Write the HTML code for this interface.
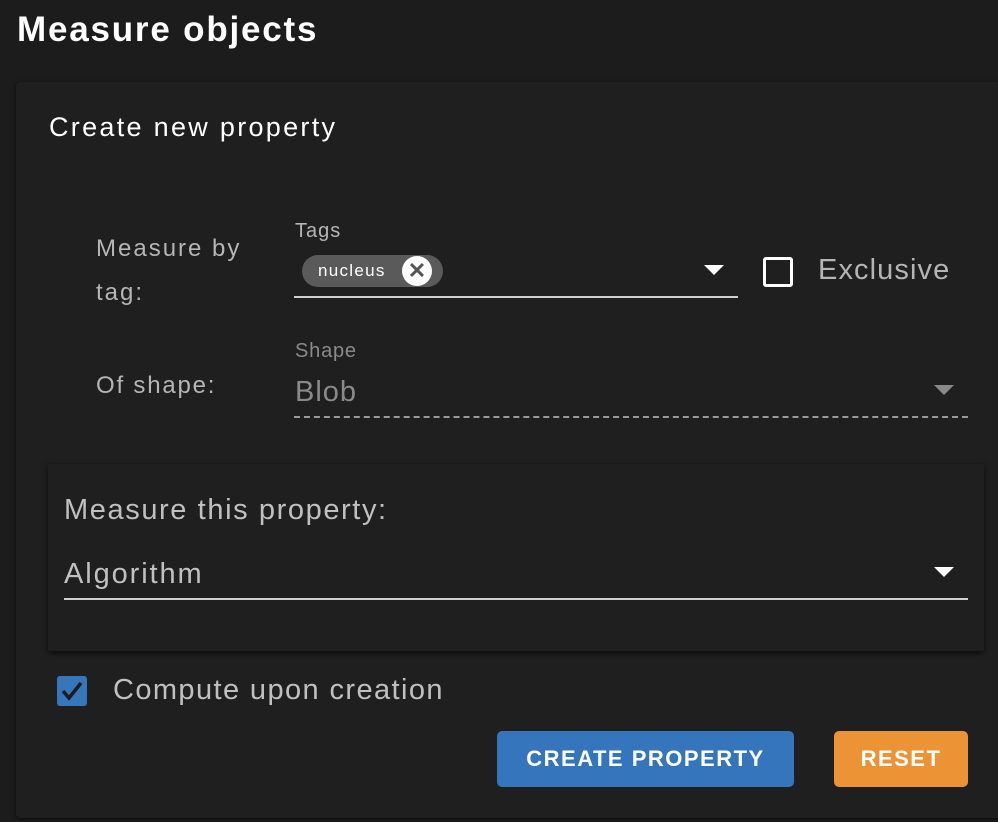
<!DOCTYPE html>
<html><head><style>
*{margin:0;padding:0;box-sizing:border-box}
body{width:998px;height:822px;background:#1c1c1c;font-family:"Liberation Sans",sans-serif;position:relative;overflow:hidden}
.a{position:absolute;white-space:nowrap}
.card{position:absolute;left:16px;top:82px;width:990px;height:736px;background:#1f1f1f;border-radius:4px;box-shadow:0 1px 4px rgba(0,0,0,.6)}
.inner{position:absolute;left:48px;top:464px;width:936px;height:187px;background:#1f1f1f;box-shadow:0 2px 6px rgba(0,0,0,.7);border-radius:2px}
</style></head><body>
<div class="a" style="left:17px;top:10px;font-size:35px;color:#fff;font-weight:bold;letter-spacing:1.8px">Measure objects</div>
<div class="card"></div>
<div class="a" style="left:49px;top:112px;font-size:27px;color:#fff;letter-spacing:2.3px">Create new property</div>
<div class="a" style="left:96px;top:227px;font-size:24px;color:#b5b5b5;line-height:44px;white-space:normal;width:170px;letter-spacing:2px">Measure by tag:</div>
<div class="a" style="left:295px;top:220px;font-size:20px;color:#b5b5b5;letter-spacing:1px">Tags</div>
<div class="a" style="left:302px;top:255px;width:141px;height:32px;border-radius:16px;background:#5a5a5a"></div>
<div class="a" style="left:318px;top:261px;font-size:17px;color:#fff;letter-spacing:1.3px">nucleus</div>
<div class="a" style="left:402px;top:256px;width:30px;height:30px;border-radius:50%;background:#fff;color:#555;font-size:22px;text-align:center;line-height:30px;font-weight:bold">✕</div>
<div class="a" style="left:704px;top:265px;width:0;height:0;border-left:10px solid transparent;border-right:10px solid transparent;border-top:10px solid #fff"></div>
<div class="a" style="left:294px;top:296px;width:444px;height:2px;background:#cfcfcf"></div>
<div class="a" style="left:763px;top:257px;width:30px;height:30px;border:3px solid #fff;border-radius:3px"></div>
<div class="a" style="left:818px;top:254px;font-size:29px;color:#b5b5b5;letter-spacing:1.1px">Exclusive</div>
<div class="a" style="left:96px;top:372px;font-size:24px;color:#b5b5b5;letter-spacing:1.8px">Of shape:</div>
<div class="a" style="left:295px;top:340px;font-size:20px;color:#8a8a8a;letter-spacing:.8px">Shape</div>
<div class="a" style="left:295px;top:376px;font-size:29px;color:#8a8a8a;letter-spacing:1px">Blob</div>
<div class="a" style="left:934px;top:385px;width:0;height:0;border-left:10px solid transparent;border-right:10px solid transparent;border-top:10px solid #8a8a8a"></div>
<div class="a" style="left:294px;top:416px;width:674px;border-top:2px dashed #9a9a9a"></div>
<div class="inner"></div>
<div class="a" style="left:64px;top:494px;font-size:29px;color:#c0c0c0;letter-spacing:1.6px">Measure this property:</div>
<div class="a" style="left:64px;top:558px;font-size:29px;color:#c0c0c0;letter-spacing:1.9px">Algorithm</div>
<div class="a" style="left:934px;top:567px;width:0;height:0;border-left:10px solid transparent;border-right:10px solid transparent;border-top:10px solid #fff"></div>
<div class="a" style="left:64px;top:598px;width:904px;height:2px;background:#cfcfcf"></div>
<div class="a" style="left:57px;top:676px;width:30px;height:30px;background:#3676bb;border-radius:3px"></div>
<svg class="a" style="left:57px;top:676px" width="30" height="30"><path d="M6 15 L12 22 L24 7" stroke="#1c1c1c" stroke-width="3.5" fill="none"/></svg>
<div class="a" style="left:113px;top:674px;font-size:29px;color:#c0c0c0;letter-spacing:1.4px">Compute upon creation</div>
<div class="a" style="left:497px;top:731px;width:297px;height:56px;background:#3575bb;border-radius:5px;color:#fff;font-size:22px;text-align:center;line-height:56px;letter-spacing:1.5px;font-weight:bold">CREATE PROPERTY</div>
<div class="a" style="left:834px;top:731px;width:134px;height:56px;background:#ec9336;border-radius:5px;color:#fff;font-size:22px;text-align:center;line-height:56px;letter-spacing:1.5px;font-weight:bold">RESET</div>
</body></html>
